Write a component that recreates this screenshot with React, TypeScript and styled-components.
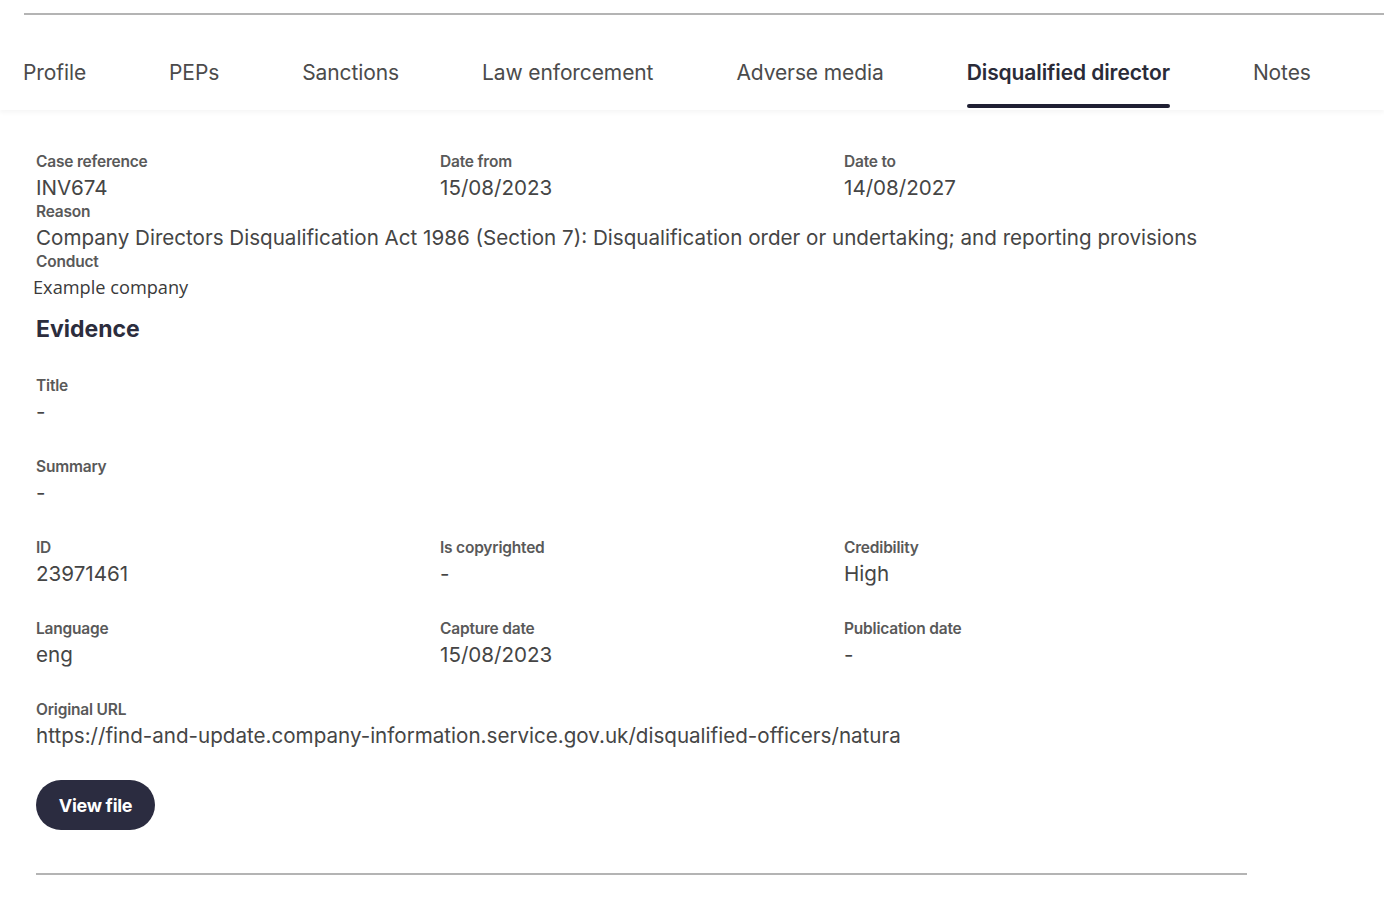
import React from "react";
import styled, { createGlobalStyle } from "styled-components";

const GlobalStyle = createGlobalStyle`
  body {
    margin: 0;
    background: #ffffff;
    font-family: Inter, "Noto Sans", Arial, sans-serif;
  }
`;

const tabs = [
  "Profile",
  "PEPs",
  "Sanctions",
  "Law enforcement",
  "Adverse media",
  "Disqualified director",
  "Notes",
];

type Field = { label: string; value: string };

const topFields: Field[] = [
  { label: "Case reference", value: "INV674" },
  { label: "Date from", value: "15/08/2023" },
  { label: "Date to", value: "14/08/2027" },
];

const metaRows: Field[][] = [
  [
    { label: "ID", value: "23971461" },
    { label: "Is copyrighted", value: "-" },
    { label: "Credibility", value: "High" },
  ],
  [
    { label: "Language", value: "eng" },
    { label: "Capture date", value: "15/08/2023" },
    { label: "Publication date", value: "-" },
  ],
];

const App = () => {
  return (
    <S.Page>
      <GlobalStyle />
      <S.TopRule />
      <S.TabBar>
        {tabs.map((t) => (
          <S.Tab key={t} $active={t === "Disqualified director"}>
            {t}
          </S.Tab>
        ))}
      </S.TabBar>

      <S.Content>
        <S.Grid>
          {topFields.map((f) => (
            <S.Field key={f.label}>
              <S.Label>{f.label}</S.Label>
              <S.Value>{f.value}</S.Value>
            </S.Field>
          ))}
        </S.Grid>
        <S.Field>
          <S.Label>Reason</S.Label>
          <S.Value>
            Company Directors Disqualification Act 1986 (Section 7):
            Disqualification order or undertaking; and reporting provisions
          </S.Value>
        </S.Field>
        <S.Field>
          <S.Label>Conduct</S.Label>
          <S.PlainValue>Example company</S.PlainValue>
        </S.Field>

        <S.Evidence>
          <S.Heading>Evidence</S.Heading>
          <S.Field>
            <S.Label>Title</S.Label>
            <S.Value>-</S.Value>
          </S.Field>
          <S.Field>
            <S.Label>Summary</S.Label>
            <S.Value>-</S.Value>
          </S.Field>
          {metaRows.map((row, i) => (
            <S.Grid key={i}>
              {row.map((f) => (
                <S.Field key={f.label}>
                  <S.Label>{f.label}</S.Label>
                  <S.Value>{f.value}</S.Value>
                </S.Field>
              ))}
            </S.Grid>
          ))}
          <S.Field>
            <S.Label>Original URL</S.Label>
            <S.Value>
              https://find-and-update.company-information.service.gov.uk/disqualified-officers/natura
            </S.Value>
          </S.Field>
          <div>
            <S.Button type="button">View file</S.Button>
          </div>
        </S.Evidence>
        <S.BottomRule />
      </S.Content>
    </S.Page>
  );
};

export default App;

const S = {
  Page: styled.div`
    width: 1384px;
    min-height: 920px;
    padding-top: 13px;
    box-sizing: border-box;
    color: #444;
  `,
  TopRule: styled.div`
    margin-left: 24px;
    height: 2px;
    background: #b4b4b4;
  `,
  TabBar: styled.nav`
    display: flex;
    gap: 83px;
    height: 95px;
    padding-left: 23px;
    align-items: stretch;
    box-shadow: 0 3px 4px rgba(0, 0, 0, 0.035);
    position: relative;
  `,
  Tab: styled.div<{ $active?: boolean }>`
    position: relative;
    display: flex;
    align-items: center;
    padding-top: 33px;
    padding-bottom: 14px;
    font-size: 21px;
    letter-spacing: -0.1px;
    font-weight: ${(p) => (p.$active ? 600 : 400)};
    color: ${(p) => (p.$active ? "#2a2b38" : "#4b4b4b")};
    white-space: nowrap;
    ${(p) =>
      p.$active &&
      `
      &::after {
        content: "";
        position: absolute;
        left: 0;
        right: 0;
        bottom: 2px;
        height: 4px;
        border-radius: 2px;
        background: #1f2033;
      }
    `}
  `,
  Content: styled.main`
    padding: 41px 0 0 36px;
    display: flex;
    flex-direction: column;
  `,
  Grid: styled.div`
    display: grid;
    grid-template-columns: 404px 404px 404px;
  `,
  Field: styled.div`
    display: flex;
    flex-direction: column;
    height: 50px;
  `,
  Label: styled.div`
    font-size: 15.5px;
    line-height: 22px;
    font-weight: 600;
    letter-spacing: -0.2px;
    color: #595959;
  `,
  Value: styled.div`
    font-size: 20.6px;
    line-height: 29px;
    color: #454545;
    white-space: nowrap;
  `,
  PlainValue: styled.div`
    font-family: "Open Sans", "Liberation Sans", sans-serif;
    font-size: 18.2px;
    line-height: 29px;
    margin-left: -3px;
    color: #3a3a3a;
  `,
  Evidence: styled.section`
    margin-top: 13px;
    display: flex;
    flex-direction: column;
    gap: 31px;
  `,
  Heading: styled.h2`
    margin: 0;
    font-size: 23px;
    line-height: 30px;
    font-weight: 700;
    color: #2c2d3d;
  `,
  Button: styled.button`
    all: unset;
    cursor: pointer;
    display: inline-flex;
    align-items: center;
    justify-content: center;
    width: 119px;
    height: 50px;
    border-radius: 25px;
    background: #2b2c40;
    color: #ffffff;
    font-family: Inter, sans-serif;
    font-size: 18px;
    font-weight: 700;
    letter-spacing: -0.3px;
  `,
  BottomRule: styled.div`
    margin-top: 43px;
    width: 1211px;
    height: 2px;
    background: #b4b4b4;
  `,
};
